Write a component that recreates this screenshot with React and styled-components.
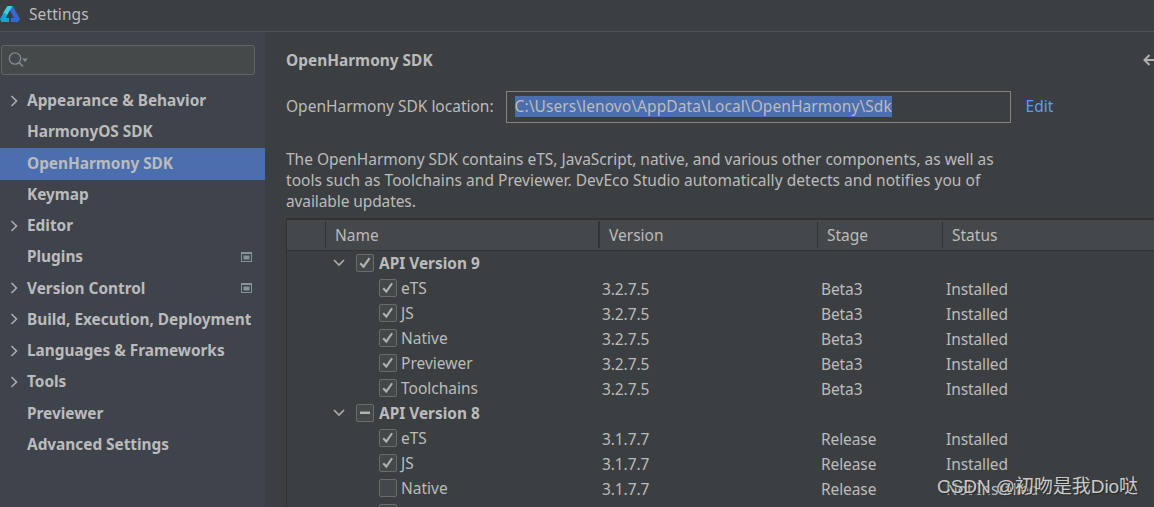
import React from "react";
import styled, { createGlobalStyle } from "styled-components";

const GlobalStyle = createGlobalStyle`
  * {
    box-sizing: border-box;
  }
  body {
    margin: 0;
    overflow: hidden;
    background: #3c3f41;
    color: #bbbbbb;
    font-family: "Noto Sans", "Open Sans", "Noto Sans CJK SC", sans-serif;
    font-size: 15.5px;
  }
`;

const Window = styled.div`
  position: relative;
  display: flex;
  flex-direction: column;
  width: 1154px;
  height: 507px;
  overflow: hidden;
`;

const TitleBar = styled.header`
  display: flex;
  align-items: center;
  flex: none;
  height: 32px;
  padding-bottom: 3px;
  gap: 9px;
  border-bottom: 1px solid #515355;
  letter-spacing: 0.1px;
`;

const Body = styled.div`
  display: flex;
  flex: 1;
  min-height: 0;
`;

const Sidebar = styled.aside`
  flex: none;
  width: 265px;
  padding-top: 13px;
  background: #3f434c;
`;

const Search = styled.div`
  display: flex;
  align-items: center;
  width: 254px;
  height: 30px;
  margin-left: 1px;
  padding-left: 6px;
  border: 1px solid #646464;
  border-radius: 3px;
  background: #45494a;
`;

const Menu = styled.nav`
  padding-top: 10px;
`;

const MenuItem = styled.div`
  display: flex;
  align-items: center;
  height: 31.25px;
  padding: 0 13px 0.2px 9px;
  font-size: 15.4px;
  font-weight: 700;
  letter-spacing: -0.02px;
  white-space: nowrap;
  background: ${(props) => (props.$active ? "#4b6eaf" : "transparent")};
  box-shadow: ${(props) => (props.$active ? "0 1px #4b6eaf" : "none")};
  .label {
    flex: 1;
    margin-left: 7px;
  }
`;

const Slot = styled.span`
  display: flex;
  flex: none;
  width: 11px;
`;

const Content = styled.main`
  flex: 1;
  min-width: 0;
  padding-left: 21px;
`;

const Heading = styled.div`
  display: flex;
  align-items: center;
  justify-content: space-between;
  height: 57px;
  font-size: 15.4px;
  font-weight: 700;
  letter-spacing: 0.02px;
  svg {
    margin-bottom: 2px;
  }
`;

const Location = styled.div`
  display: flex;
  align-items: center;
  height: 36px;
  .text {
    margin-bottom: 2px;
  }
`;

const PathField = styled.div`
  display: flex;
  align-items: center;
  width: 505px;
  height: 32px;
  margin: 0 15px 0 12px;
  padding: 0 0 1px 8px;
  border: 1px solid #848484;
  span {
    height: 21px;
    line-height: 20px;
    letter-spacing: 0.08px;
    background: #4b6eaf;
  }
`;

const Link = styled.a`
  color: #589df6;
`;

const Description = styled.div`
  display: flex;
  flex-direction: column;
  height: 63px;
  margin: 24px 0 6px;
  line-height: 21px;
  white-space: nowrap;
`;

const Line = styled.span`
  letter-spacing: ${(props) => props.$track}px;
`;

const Table = styled.div`
  border-top: 2px solid #323232;
  border-left: 1px solid #323232;
`;

const HeaderRow = styled.div`
  display: grid;
  grid-template-columns: 39px 274px 218px 125px 1fr;
  height: 31px;
  padding: 1px 0 2px;
  background: #45484a;
  border-bottom: 1px solid #323537;
`;

const HeaderCell = styled.div`
  display: flex;
  align-items: center;
  padding-left: 9px;
  border-right: ${(props) => props.$line || 1}px solid #323537;
  &:last-child {
    border-right: 0;
  }
`;

const Row = styled.div`
  display: grid;
  grid-template-columns: 315px 219px 125px 1fr;
  height: 25px;
`;

const NameCell = styled.div`
  display: flex;
  align-items: center;
  padding-left: ${(props) => (props.$group ? 46 : 92)}px;
  font-size: ${(props) => (props.$group ? 15.4 : 15.5)}px;
  font-weight: ${(props) => (props.$group ? 700 : 400)};
  .name {
    margin-bottom: ${(props) => (props.$group ? 0 : 2)}px;
  }
`;

const Cell = styled.div`
  display: flex;
  align-items: center;
  letter-spacing: -0.1px;
`;

const Box = styled.span`
  display: flex;
  align-items: center;
  justify-content: center;
  flex: none;
  width: ${(props) => (props.$group ? 18 : 17.5)}px;
  height: 18px;
  margin: 0 ${(props) => (props.$group ? "5px 1px 11px" : "4.5px 1px 0")};
  border: 1px solid #6b6b6b;
  border-radius: 2px;
  background: #43494a;
`;

// sits on top of the table in the bottom corner
const Watermark = styled.div`
  position: absolute;
  right: 16px;
  bottom: 5px;
  color: #c9cacb;
  font-family: "Liberation Sans", "Noto Sans CJK SC", sans-serif;
  font-size: 19px;
  line-height: 30px;
  letter-spacing: -0.07px;
  white-space: nowrap;
  text-shadow: 1px 1px 1px #26282a;
`;

const Logo = () => (
  <svg width="20" height="18" viewBox="0 0 20 18">
    <path d="M7.5 1h5l2 3.5-2.5 2L10 5 6 12l-3-4z" fill="#3fd0df" />
    <path d="M0 14l4-7 3 3.5L6 13h3v4H1.5z" fill="#18a2cf" />
    <path d="M12.5 1L20 14l-2 3h-7v-4h3L10 5.5z" fill="#3668d4" />
  </svg>
);

const SearchIcon = () => (
  <svg width="22" height="18" viewBox="0 0 22 18" fill="none" stroke="#7f8b91">
    <circle cx="7" cy="7.5" r="5.7" strokeWidth="1.3" />
    <path d="M11 11.5l4 4" strokeWidth="1.6" />
    <path d="M14 7.5h6l-3 3.5z" fill="#7f8b91" stroke="none" />
  </svg>
);

const Chevron = ({ down }) =>
  down ? (
    <svg width="12" height="10" viewBox="0 0 12 10">
      <path d="M1 1l5 5 5-5" fill="none" stroke="#adadad" strokeWidth="1.6" />
    </svg>
  ) : (
    <svg width="11" height="12" viewBox="0 0 11 12">
      <path d="M2.5 1l5 5-5 5" fill="none" stroke="#adadad" strokeWidth="1.6" />
    </svg>
  );

const ProjectIcon = () => (
  <svg width="11" height="10" viewBox="0 0 11 10">
    <path d="M0 0h11v10H0zM1 2v7h9V2z" fill="#87939a" fillRule="evenodd" />
    <path d="M2.5 3.5h6v4h-6z" fill="#87939a" />
  </svg>
);

const BackArrow = () => (
  <svg width="11" height="12" viewBox="0 0 11 12">
    <path
      d="M6.5 1L1.5 6l5 5M2 6h9"
      fill="none"
      stroke="#afb1b3"
      strokeWidth="2"
    />
  </svg>
);

const Checkbox = ({ state, group }) => (
  <Box $group={group}>
    {state === "on" && (
      <svg width="16" height="16" viewBox="0 0 16 16">
        <path
          d="M3.3 8.3l3.2 3.4 6-8.6"
          fill="none"
          stroke="#b0b2b2"
          strokeWidth="2.2"
        />
      </svg>
    )}
    {state === "mixed" && (
      <svg width="16" height="16" viewBox="0 0 16 16">
        <path d="M3 6.5h10v2.5H3z" fill="#b0b2b2" />
      </svg>
    )}
  </Box>
);

const menu = [
  { label: "Appearance & Behavior", open: true },
  { label: "HarmonyOS SDK" },
  { label: "OpenHarmony SDK", active: true },
  { label: "Keymap" },
  { label: "Editor", open: true },
  { label: "Plugins", project: true },
  { label: "Version Control", open: true, project: true },
  { label: "Build, Execution, Deployment", open: true },
  { label: "Languages & Frameworks", open: true },
  { label: "Tools", open: true },
  { label: "Previewer" },
  { label: "Advanced Settings" },
];

const installed = ["3.2.7.5", "Beta3", "Installed"];
const release = ["3.1.7.7", "Release", "Installed"];

const rows = [
  { name: "API Version 9", group: true, state: "on" },
  { name: "eTS", state: "on", cells: installed },
  { name: "JS", state: "on", cells: installed },
  { name: "Native", state: "on", cells: installed },
  { name: "Previewer", state: "on", cells: installed },
  { name: "Toolchains", state: "on", cells: installed },
  { name: "API Version 8", group: true, state: "mixed" },
  { name: "eTS", state: "on", cells: release },
  { name: "JS", state: "on", cells: release },
  { name: "Native", state: "off", cells: ["3.1.7.7", "Release", "Not Installed"] },
  { name: "", state: "off", cells: [] },
];

export default function App() {
  return (
    <Window>
      <GlobalStyle />
      <TitleBar>
        <Logo />
        <span>Settings</span>
      </TitleBar>
      <Body>
        <Sidebar>
          <Search>
            <SearchIcon />
          </Search>
          <Menu>
            {menu.map((item) => (
              <MenuItem key={item.label} $active={item.active}>
                <Slot>{item.open && <Chevron />}</Slot>
                <span className="label">{item.label}</span>
                {item.project && <ProjectIcon />}
              </MenuItem>
            ))}
          </Menu>
        </Sidebar>
        <Content>
          <Heading>
            <span>OpenHarmony SDK</span>
            <BackArrow />
          </Heading>
          <Location>
            <span className="text">OpenHarmony SDK location:</span>
            <PathField>
              <span>C:\Users\lenovo\AppData\Local\OpenHarmony\Sdk</span>
            </PathField>
            <Link className="text">Edit</Link>
          </Location>
          <Description>
            <Line $track={-0.02}>
              The OpenHarmony SDK contains eTS, JavaScript, native, and various other components, as well as
            </Line>
            <Line $track={0.04}>
              tools such as Toolchains and Previewer. DevEco Studio automatically detects and notifies you of
            </Line>
            <Line $track={-0.1}>available updates.</Line>
          </Description>
          <Table>
            <HeaderRow>
              <HeaderCell />
              <HeaderCell $line={2}>Name</HeaderCell>
              <HeaderCell>Version</HeaderCell>
              <HeaderCell>Stage</HeaderCell>
              <HeaderCell>Status</HeaderCell>
            </HeaderRow>
            {rows.map((row, i) => (
              <Row key={i}>
                <NameCell $group={row.group}>
                  {row.group && <Chevron down />}
                  <Checkbox state={row.state} group={row.group} />
                  <span className="name">{row.name}</span>
                </NameCell>
                {(row.cells || []).map((text) => (
                  <Cell key={text}>{text}</Cell>
                ))}
              </Row>
            ))}
          </Table>
        </Content>
      </Body>
      <Watermark>CSDN @初吻是我Dio哒</Watermark>
    </Window>
  );
}
